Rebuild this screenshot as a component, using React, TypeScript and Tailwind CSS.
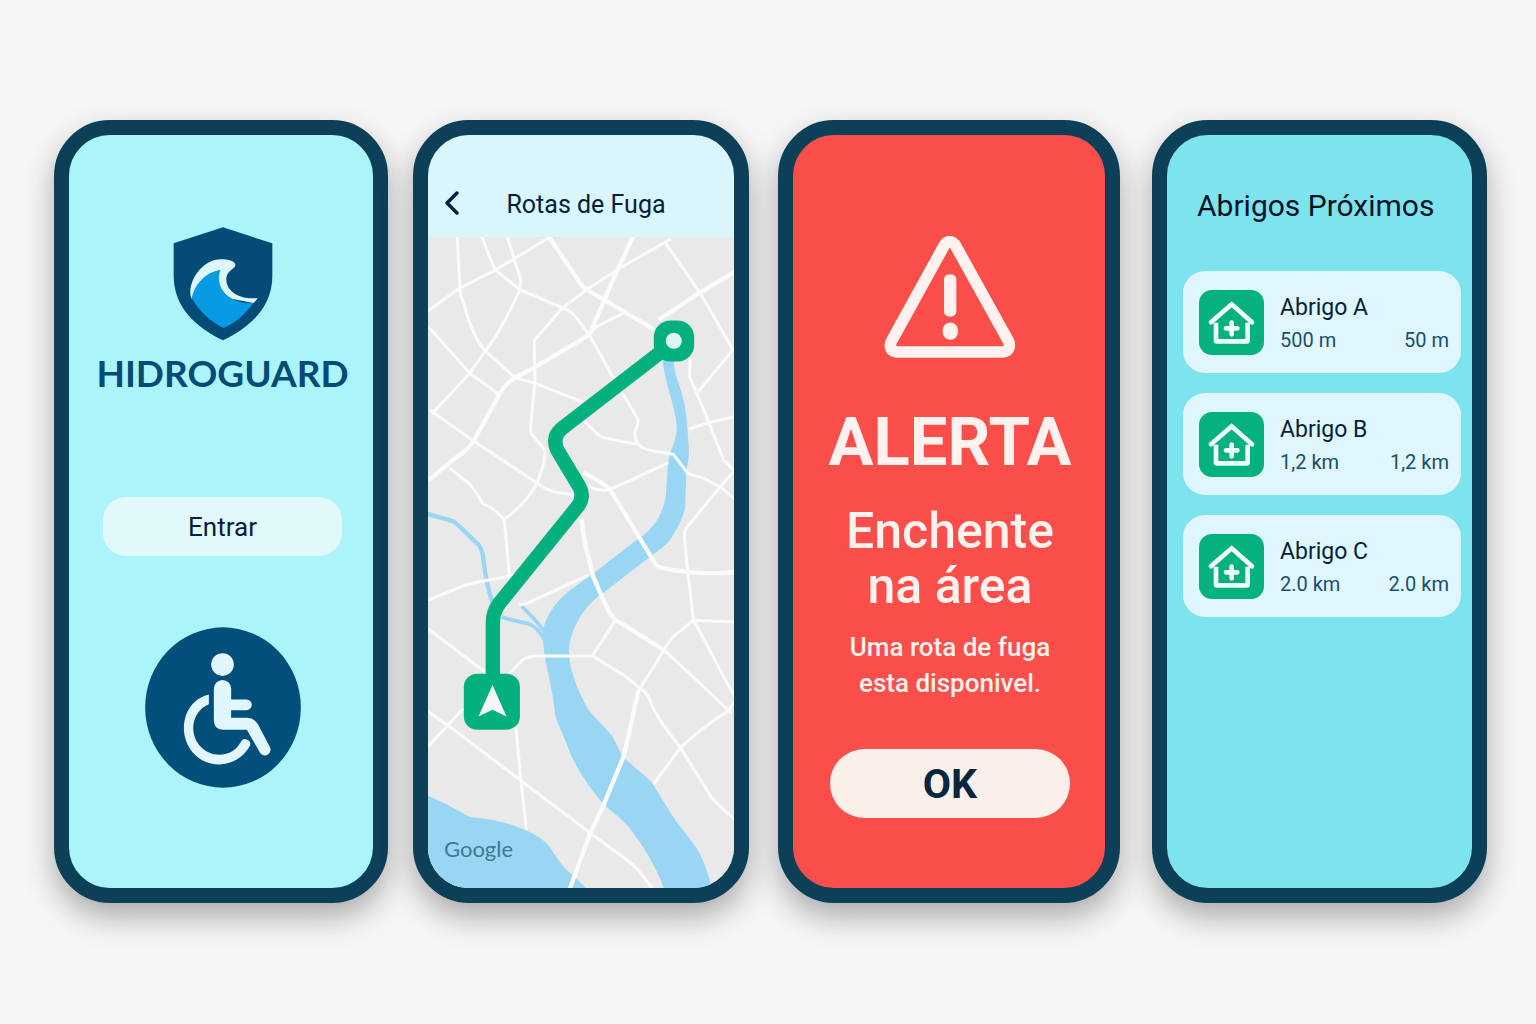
import type { ReactNode } from "react";

const roads = [
  "M112 15L120 175Q122 200 132 222Q158 320 195 362L285 443L345 460L485 515",
  "M183 15L225 120L300 180L430 235Q455 245 470 265L508 315L580 445L650 562Q658 574 650 590Q640 610 648 632Q655 655 700 663L760 673L800 726Q815 738 845 742L900 770L945 808",
  "M260 15L303 152L298 185Q240 310 195 365L150 430L35 553",
  "M25 243L120 175L225 122L390 22",
  "M752 28L600 115L500 180L430 232L343 332L345 455L332 590Q330 610 340 618L376 662Q375 700 352 758Q320 820 253 867Q262 960 270 1055",
  "M610 250L530 290L508 315",
  "M735 38L840 190L938 360L830 490",
  "M25 290L150 430L235 492",
  "M30 540L160 632L345 755Q380 780 410 787L465 795",
  "M490 570L530 610Q540 622 560 625L650 643",
  "M810 385L808 440L830 490L865 575L910 690L942 722",
  "M805 598L865 578L945 560",
  "M505 770Q530 782 560 780L600 765L745 698",
  "M945 720L900 770L798 895Q792 905 793 925L803 1025L820 1170L770 1210Q755 1220 730 1262L655 1382",
  "M820 1170L945 1175",
  "M820 1170Q860 1240 900 1320L945 1402",
  "M730 1258L830 1350L935 1450",
  "M585 1172L518 1275",
  "M265 1335L305 1292Q320 1278 345 1277L518 1277L620 1340L660 1375Q680 1385 690 1410Q700 1450 780 1550L870 1695Q880 1712 945 1768",
  "M945 1412L925 1440Q840 1495 780 1552L700 1662",
  "M90 715L150 762Q165 780 190 822Q225 832 252 870",
  "M25 1110Q90 1085 135 1065Q160 1057 310 1030",
  "M505 1035L320 1120L298 1124",
  "M25 1195L195 1325",
  "M25 1443L85 1485L510 1807L630 1895Q650 1910 698 1975",
  "M130 1435L25 1548",
  "M288 1490L302 1640L320 1797",
];

const mainRoads = [
  "M385 18L480 160Q488 172 500 180L560 215L700 298",
  "M642 15L590 125L510 310",
  "M945 125L840 188L715 270",
  "M508 315L340 415L285 443Q245 470 230 510L160 635Q145 660 105 685L25 752",
  "M490 728L540 755L570 778L690 975Q705 1005 715 1010Q740 1018 800 1025Q880 1033 945 1025",
  "M485 865Q490 920 500 960L520 1040L550 1110Q570 1155 585 1168L730 1258",
  "M655 1380L635 1470Q625 1520 610 1580L550 1725L510 1810L448 1978",
];

function CityMap() {
  return (
    <svg
      viewBox="24 22 918 1950"
      preserveAspectRatio="xMidYMid slice"
      className="absolute inset-0 h-full w-full"
      role="img"
      aria-label="Mapa da rota de fuga"
    >
      <rect x="-400" y="-400" width="1800" height="2800" fill="#e9e9ea" />
      <g fill="#99d6f3">
        <path d="M727 380C730 450 770 540 770 595C768 640 745 665 743 710L738 790C730 860 690 905 655 925L520 1030C450 1080 425 1095 395 1140C370 1180 368 1195 370 1240C374 1300 400 1380 405 1450C410 1475 425 1500 440 1540C460 1600 500 1660 545 1715C570 1740 600 1760 625 1788C665 1840 705 1900 733 1978H877C865 1930 845 1870 820 1840C800 1810 780 1790 750 1745L695 1655Q680 1640 610 1582Q598 1560 578 1520C550 1480 510 1455 490 1410C465 1360 445 1300 447 1260C450 1200 490 1130 540 1095L690 980C730 950 745 940 755 920C775 890 790 860 795 830L798 740C800 700 808 690 806 650C802 600 800 540 785 490C775 450 762 440 760 380Z" />
        <path d="M20 1695C75 1715 110 1740 150 1759C180 1764 210 1763 235 1773C270 1780 290 1787 320 1800C350 1815 370 1825 390 1850Q430 1915 455 1930L505 1980H20Z" />
      </g>
      <g fill="none" stroke="#99d6f3">
        <path d="M20 850Q60 862 90 870Q105 874 115 885L170 938Q188 952 191 990Q198 1060 222 1130" strokeWidth="13" />
        <path d="M245 1160Q270 1168 325 1180Q355 1190 380 1240M305 1128Q350 1170 378 1210" strokeWidth="11" />
      </g>
      <g fill="none" stroke="#fbfbfb" strokeLinejoin="round">
        <g strokeWidth="9">
          {roads.map((d) => (
            <path key={d} d={d} />
          ))}
        </g>
        <g strokeWidth="13">
          {mainRoads.map((d) => (
            <path key={d} d={d} />
          ))}
        </g>
      </g>
      <path
        d="M219 1350V1175Q219 1145 238 1120L474 828Q494 800 478 770L412 660Q395 622 425 596L750 345"
        fill="none"
        stroke="#04b07e"
        strokeWidth="43"
        strokeLinejoin="round"
      />
      <rect x="701" y="272" width="121" height="123" rx="50" fill="#04b07e" />
      <circle cx="761" cy="333" r="24" fill="#dff4f6" />
      <rect x="132" y="1330" width="168" height="168" rx="40" fill="#04b07e" />
      <path d="M218 1364L260 1458L218 1438L176 1458Z" fill="#f4f8f7" />
    </svg>
  );
}

function ShieldLogo() {
  return (
    <svg viewBox="250 49 298 342" className="h-[114px] w-[100px]" aria-hidden="true">
      <path d="M399 50L547 98V195C547 290 480 350 399 389C318 350 251 290 251 195V98Z" fill="#044b77" />
      <path d="M304 264C288 220 335 140 400 146C425 148 437 155 436 165C433 176 410 178 409 205C408 245 455 268 502 262C500 269 495 273 490 277L400 260L340 230Z" fill="#dcf6fb" />
      <path d="M391 177C345 185 315 220 305 261C325 300 365 335 401 352C440 335 465 310 490 277C430 282 370 240 391 177Z" fill="#069be2" />
    </svg>
  );
}

function WheelchairBadge() {
  return (
    <svg viewBox="42 52 469 484" className="h-[161px] w-[156px]" role="img" aria-label="Acessibilidade">
      <ellipse cx="276.500" cy="294" rx="234" ry="241" fill="#034f7c" />
      <circle cx="275" cy="165" r="34" fill="#e2f7fd" />
      <path d="M249 237A26 26 0 0 1 301 237V270H347A16 16 0 0 1 347 302H301V325H348Q370 325 382 345L417 412A17 17 0 0 1 388 430L348 361H276Q249 360 249 333Z" fill="#e2f7fd" />
      <path d="M234 255V284C205 295 187 325 187 355C187 400 222 436 265 436C295 436 318 420 331 396A15 15 0 0 1 358 408C340 442 305 465 263 465C205 465 159 415 159 357C159 305 190 265 234 255Z" fill="#e2f7fd" />
    </svg>
  );
}

function WarningIcon() {
  return (
    <svg viewBox="72 45 396 367" className="h-[122px] w-[132px]" aria-hidden="true">
      <path
        d="M254 71Q269 53 285 71L447 363Q454 391 429 394H110Q84 391 93 363Z"
        fill="none"
        stroke="#fef1ee"
        strokeWidth="35"
        strokeLinejoin="round"
      />
      <rect x="252" y="161" width="37" height="126" rx="14" fill="#fef1ee" />
      <rect x="248" y="305" width="46" height="52" rx="23" fill="#fef1ee" />
    </svg>
  );
}

function ShelterIcon() {
  return (
    <svg viewBox="0 0 195 195" className="size-[65px] shrink-0 rounded-[13px] bg-[#05b17f]" fill="none" stroke="#f1fffb" aria-hidden="true">
      <path d="M36 97L98 43L159 97" strokeWidth="14" strokeLinecap="round" />
      <path d="M51 98V152Q51 154 54 154H143Q146 154 146 152V98" strokeWidth="14" />
      <path d="M98 98V133M81 115H115" strokeWidth="14" strokeLinecap="round" />
    </svg>
  );
}

function Phone({ className, label, children }: { className: string; label: string; children: ReactNode }) {
  return (
    <section
      aria-label={label}
      className={`flex min-w-0 flex-col overflow-hidden rounded-[56px] border-[15px] border-[#0c4058] shadow-[0_14px_30px_rgba(40,40,40,0.36)] ${className}`}
    >
      {children}
    </section>
  );
}

const shelters = [
  { name: "Abrigo A", distance: "500 m", route: "50 m" },
  { name: "Abrigo B", distance: "1,2 km", route: "1,2 km" },
  { name: "Abrigo C", distance: "2.0 km", route: "2.0 km" },
];

export default function App() {
  return (
    <main className="flex min-h-screen items-center bg-[#f6f6f6] pr-[49px] pb-px pl-[54px] font-[Roboto,sans-serif] text-[#06203c]">
      <div className="flex w-full items-stretch">
        <Phone label="Início" className="flex-[301] items-center bg-[#abf5fa] pt-[92px] pl-[3px]">
          <ShieldLogo />
          <h1 className="mt-2.5 font-[Lato,sans-serif] text-[37px] leading-[44px] font-bold text-[#064b78]">HIDROGUARD</h1>
          <div className="mt-[102px] w-full px-[31px]">
            <button type="button" className="h-[59px] w-full rounded-[23px] bg-[#e2f9fb] pt-0.5 text-[26px]">
              Entrar
            </button>
          </div>
          <button type="button" className="mt-[71px] rounded-full">
            <WheelchairBadge />
          </button>
        </Phone>

        <Phone label="Rotas de Fuga" className="ml-[25px] flex-[306] bg-[#d8f6fc]">
          <header className="flex h-[102px] items-end px-3 pb-4">
            <button type="button" aria-label="Voltar" className="flex h-9 w-6 items-center justify-center">
              <svg viewBox="0 0 16 26" className="h-[26px] w-4" fill="none" stroke="#06203c" strokeWidth="3.5" strokeLinecap="round" strokeLinejoin="round" aria-hidden="true">
                <path d="M13 3L3 13L13 23" />
              </svg>
            </button>
            <h2 className="flex-1 pr-3.5 text-center text-[25px] leading-8">Rotas de Fuga</h2>
          </header>
          <div className="relative min-h-[651px] flex-1">
            <CityMap />
            <span className="absolute bottom-[25px] left-4 font-[Lato,sans-serif] text-[22px] leading-7 text-[#447795]">Google</span>
          </div>
        </Phone>

        <Phone label="Alerta" className="ml-[29px] flex-[310] items-center bg-[#fa4e4a] pt-[101px] pl-0.5 text-center text-[#fef1ee]">
          <WarningIcon />
          <h2 className="mt-12 text-[67px] leading-[72px] font-bold">ALERTA</h2>
          <p className="mt-[26px] text-[50px] leading-[55px] font-medium">
            Enchente
            <br />
            na área
          </p>
          <p className="mt-[15px] text-[26px] leading-9 font-medium">
            Uma rota de fuga
            <br />
            esta disponivel.
          </p>
          <div className="mt-12 w-full px-[35px]">
            <button type="button" className="h-[69px] w-full rounded-full bg-[#fbefea] pt-0.5 text-[41px] font-bold text-[#06273f]">
              OK
            </button>
          </div>
        </Phone>

        <Phone label="Abrigos Próximos" className="ml-8 flex-[305] bg-[#7de3ef]">
          <h2 className="mt-[53px] pl-[30px] text-[30px] leading-9 whitespace-nowrap text-[#04131f]">Abrigos Próximos</h2>
          <ul className="mt-[47px] flex flex-col gap-5 pr-[11px] pl-4">
            {shelters.map((shelter) => (
              <li key={shelter.name} className="flex h-[102px] items-center gap-4 rounded-[22px] bg-[#dff6fc] pr-3 pl-4">
                <ShelterIcon />
                <div className="flex-1 pt-1">
                  <h3 className="text-[23px] leading-8">{shelter.name}</h3>
                  <div className="flex justify-between text-[20px] leading-8 text-[#18506c]">
                    <span>{shelter.distance}</span>
                    <span>{shelter.route}</span>
                  </div>
                </div>
              </li>
            ))}
          </ul>
        </Phone>
      </div>
    </main>
  );
}
